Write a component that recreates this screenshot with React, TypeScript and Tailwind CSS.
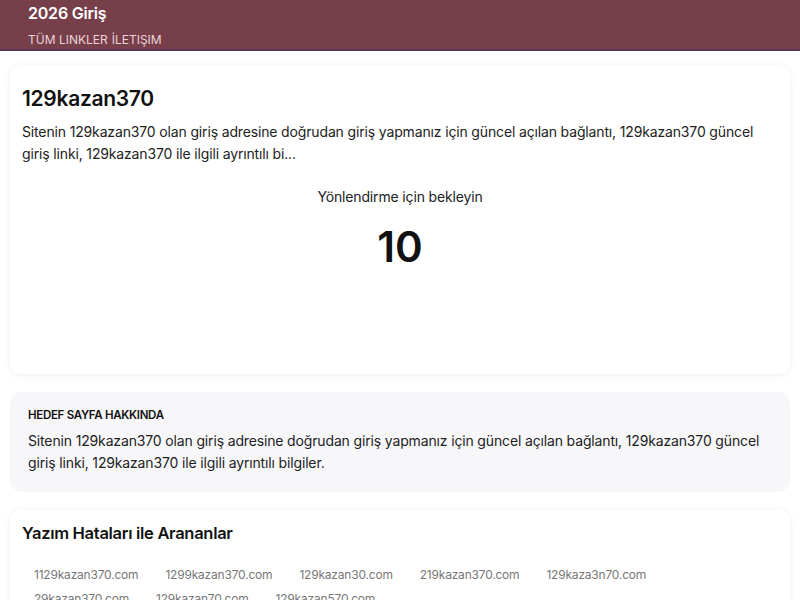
import React from 'react';

const typos = [
  '1129kazan370.com',
  '1299kazan370.com',
  '129kazan30.com',
  '219kazan370.com',
  '129kaza3n70.com',
  '29kazan370.com',
  '129kazan70.com',
  '129kazan570.com',
];

const desc =
  'Sitenin 129kazan370 olan giriş adresine doğrudan giriş yapmanız için güncel açılan bağlantı, 129kazan370 güncel giriş linki, 129kazan370 ile ilgili ayrıntılı bilgiler.';

export default function App() {
  return (
    <div className="min-h-screen bg-white text-[#111] font-['Inter','Noto_Sans',sans-serif]">
      <header className="bg-[#763f4a] border-b-2 border-[#5a3450] px-7 pt-[3px] h-[51px]">
        <div className="text-white font-semibold text-[16px] leading-[20px] tracking-[-0.2px]">2026 Giriş</div>
        <nav className="mt-[9px] text-[12px] leading-[16px] text-[#ecd3da] flex gap-[4px]">
          <a>TÜM LINKLER</a>
          <a>İLETIŞIM</a>
        </nav>
      </header>

      <main className="px-[10px] pt-[15px] flex flex-col gap-[18px]">
        <section className="rounded-xl bg-white shadow-[0_1px_8px_rgba(0,0,0,0.07)] px-3 pt-[18px] pb-3 h-[308px]">
          <h1 className="text-[21px] leading-[30px] font-semibold tracking-[-0.3px]">129kazan370</h1>
          <p className="mt-[7px] text-[14px] leading-[22px] tracking-[-0.15px] text-[#222]">
            Sitenin 129kazan370 olan giriş adresine doğrudan giriş yapmanız için güncel açılan bağlantı, 129kazan370 güncel giriş linki, 129kazan370 ile ilgili ayrıntılı bi...
          </p>
          <div className="mt-[21px] text-center text-[14px] leading-[22px] tracking-[-0.15px] text-[#222]">
            Yönlendirme için bekleyin
          </div>
          <div className="mt-[14px] text-center text-[42px] leading-[50px] font-semibold">10</div>
        </section>

        <section className="rounded-xl bg-[#f7f7fa] px-[18px] pt-[15px] pb-[18px]">
          <h2 className="text-[11.5px] leading-[16px] font-semibold tracking-[-0.3px] text-[#111]">HEDEF SAYFA HAKKINDA</h2>
          <p className="mt-[7px] text-[14px] leading-[22px] tracking-[-0.15px] text-[#222]">{desc}</p>
        </section>

        <section className="rounded-xl bg-white shadow-[0_1px_8px_rgba(0,0,0,0.07)] px-3 pt-[11px] pb-4">
          <h2 className="text-[16.5px] leading-[24px] font-semibold tracking-[-0.3px]">Yazım Hataları ile Arananlar</h2>
          <div className="mt-[18px] flex flex-wrap gap-x-[3px]">
            {typos.map((t) => (
              <a key={t} className="px-3 text-[12px] leading-[24px] text-[#777] tracking-[-0.2px]">
                {t}
              </a>
            ))}
          </div>
        </section>
      </main>
    </div>
  );
}
